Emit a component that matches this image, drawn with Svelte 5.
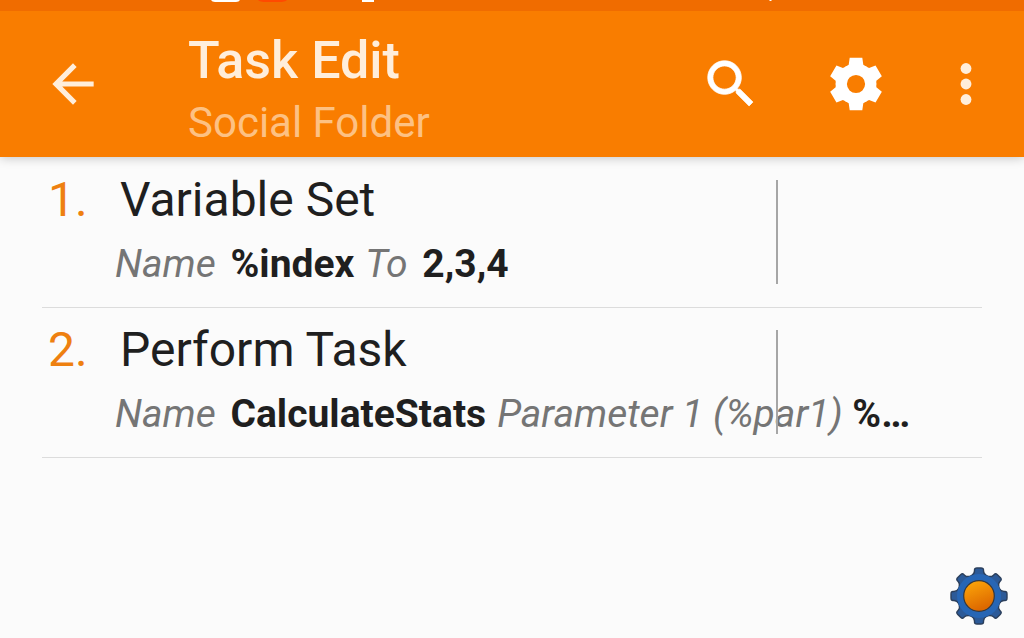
<script>
	const title = 'Task Edit'
	const folder = 'Social Folder'

	const actions = [
		{
			name: 'Variable Set',
			args: [
				{ label: 'Name', value: '%index' },
				{ label: 'To', value: '2,3,4' },
			],
		},
		{
			name: 'Perform Task',
			args: [
				{ label: 'Name', value: 'CalculateStats' },
				{ label: 'Parameter 1 (%par1)', value: '%…', tight: true },
			],
		},
	]

	const sixTeeth = [0, 60, 120, 180, 240, 300]
	const eightTeeth = [0, 45, 90, 135, 180, 225, 270, 315]
</script>

<div class="status">
	<svg viewBox="0 0 1024 11" preserveAspectRatio="xMidYMin slice" aria-hidden="true">
		<path d="M211 0h29q-1 2-4 2h-21q-3 0-4-2z" fill="#fff" />
		<path d="M258 0h29q-2 2-8 2h-13q-6 0-8-2z" fill="#ff4a00" />
		<path d="M362 0h12v2h-12z" fill="#fff" />
		<path d="M769 0h3l-1 1h-1z" fill="#fff" />
	</svg>
</div>

<header>
	<button class="icon" aria-label="Back">
		<svg viewBox="0 0 24 24">
			<path d="M20 11H7.83l5.59-5.59L12 4l-8 8 8 8 1.41-1.41L7.83 13H20v-2z" fill="#ffeedb" />
		</svg>
	</button>
	<div class="titles">
		<h1>{title}</h1>
		<p>{folder}</p>
	</div>
	<button class="icon" aria-label="Search">
		<svg viewBox="0 0 24 24">
			<path
				d="M15.5 14h-.79l-.28-.27C15.41 12.59 16 11.11 16 9.5 16 5.91 13.09 3 9.5 3S3 5.91 3 9.5 5.91 16 9.5 16c1.61 0 3.09-.59 4.23-1.57l.27.28v.79l5 4.99L20.49 19l-4.99-5zm-6 0C7.01 14 5 11.99 5 9.5S7.01 5 9.5 5 14 7.01 14 9.5 11.99 14 9.5 14z"
				fill="#fff"
				stroke="#fff"
				stroke-width="0.3"
			/>
		</svg>
	</button>
	<button class="icon settings" aria-label="Settings">
		<svg viewBox="-31 -31 62 62">
			<circle r="14.3" fill="none" stroke="#fff" stroke-width="10.4" />
			{#each sixTeeth as angle}
				<path d="M-6.3-26.2H6.3L7.3-19.3 11-17 5-13H-5L-11-17-7.3-19.3z" transform="rotate({angle})" fill="#fff" />
			{/each}
		</svg>
	</button>
	<button class="icon" aria-label="More options">
		<svg viewBox="0 0 24 24" fill="#ffeedb">
			<circle cx="12" cy="6" r="2.1" />
			<circle cx="12" cy="12" r="2.1" />
			<circle cx="12" cy="18" r="2.1" />
		</svg>
	</button>
</header>

<main>
	<ol>
		{#each actions as action, i}
			<li>
				<span class="number">{i + 1}.</span>
				<div class="action">
					<h2>{action.name}</h2>
					<p>
						{#each action.args as arg}
							<em class:tight={arg.tight}>{arg.label}</em>
							<strong>{arg.value}</strong>
						{/each}
					</p>
				</div>
			</li>
		{/each}
	</ol>
</main>

<svg class="badge" viewBox="-30 -30 60 60" aria-hidden="true">
	<defs>
		<linearGradient id="core" x1="0" y1="0" x2="0.4" y2="1">
			<stop offset="0" stop-color="#ffab0a" />
			<stop offset="1" stop-color="#dd6800" />
		</linearGradient>
	</defs>
	{#each eightTeeth as angle}
		<path
			d="M-8-20Q-4.500-22-4.500-25V-26Q-4.500-28-2-28H2Q4.500-28 4.500-26V-25Q4.500-22 8-20z"
			transform="rotate({angle})"
			fill="#2c5a98"
			stroke="#2b3f5c"
			stroke-width="1.4"
		/>
	{/each}
	<circle r="22" fill="#2766b5" />
	<circle r="15.3" fill="url(#core)" stroke="#35383d" stroke-width="1.2" />
</svg>

<style>
	:global(body) {
		margin: 0;
		background: #fbfbfb;
		font-family: Roboto, sans-serif;
	}

	h1,
	h2,
	p,
	ol {
		margin: 0;
		padding: 0;
	}

	.status {
		position: relative;
		z-index: 1;
		height: 11px;
		background: #f06c00;
	}

	.status svg {
		display: block;
		width: 100%;
		height: 11px;
	}

	header {
		display: flex;
		align-items: center;
		height: 146px;
		padding: 0 27px 0 42px;
		background: #f97d00;
		box-shadow: 0 1px 10px rgba(0, 0, 0, 0.22);
	}

	.icon {
		flex: none;
		width: 62px;
		height: 62px;
		padding: 0;
		border: none;
		background: none;
		cursor: pointer;
	}

	.icon svg {
		display: block;
		width: 100%;
		height: 100%;
	}

	.settings {
		margin: 0 48px 0 63px;
	}

	.titles {
		flex: 1;
		padding: 14px 0 0 84px;
	}

	h1 {
		color: #ffeedb;
		font-size: 52px;
		font-weight: 500;
		line-height: 64px;
	}

	.titles p {
		color: #fdc183;
		font-size: 42px;
		line-height: 60px;
	}

	ol {
		padding: 1px 42px 0;
		list-style: none;
	}

	li {
		position: relative;
		display: flex;
		padding: 12px 0 9px 6px;
		border-bottom: 1px solid #dcdcdc;
	}

	/* divider between the action and its drag area */
	li::after {
		content: '';
		position: absolute;
		top: 22px;
		right: 204px;
		bottom: 23px;
		width: 2px;
		background: #a6a6a6;
	}

	.number,
	h2 {
		font-size: 48px;
		font-weight: 400;
		line-height: 60px;
	}

	.number {
		width: 67px;
		color: #ee8010;
	}

	.action {
		flex: 1;
		min-width: 0;
	}

	h2 {
		padding-left: 5px;
		color: #1f1f1f;
	}

	.action p {
		overflow: hidden;
		color: #1f1f1f;
		font-size: 39px;
		line-height: 68px;
		white-space: nowrap;
	}

	em {
		margin-right: 5px;
		color: #757575;
	}

	em.tight {
		margin-right: 0;
	}

	strong {
		margin-right: 11px;
	}

	.badge {
		position: fixed;
		right: 15px;
		bottom: 12px;
		width: 60px;
		height: 60px;
	}
</style>
